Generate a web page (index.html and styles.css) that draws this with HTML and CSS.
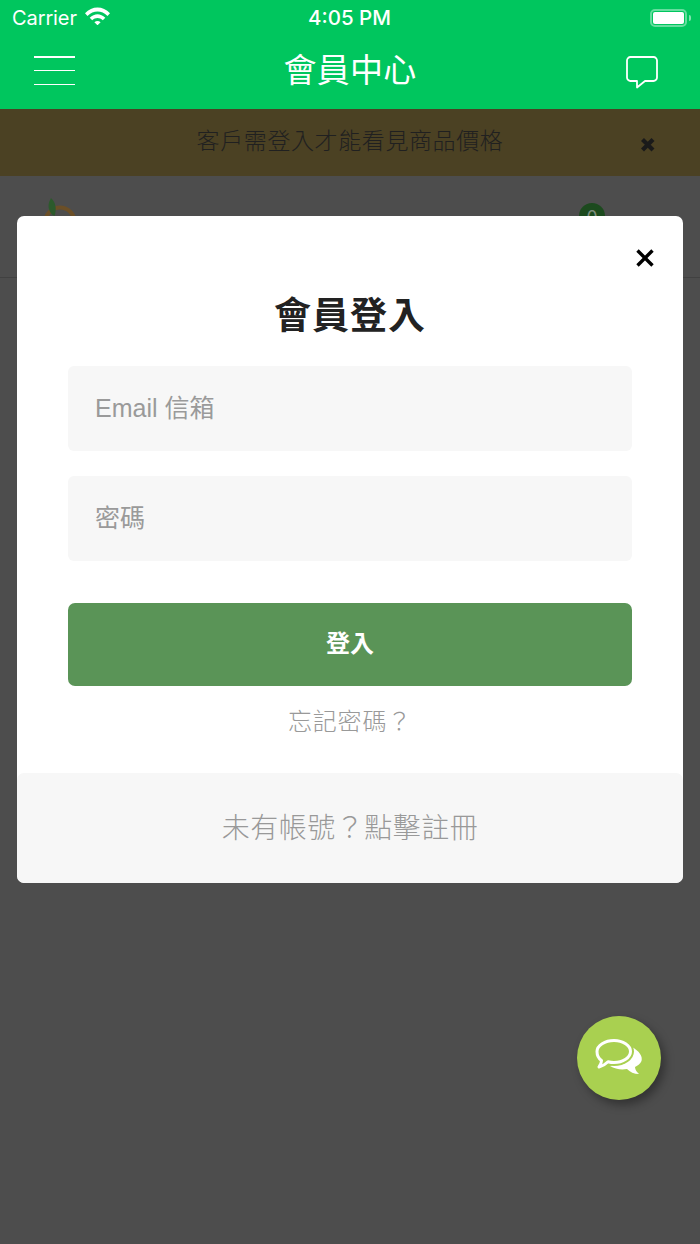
FILE: index.html
```html
<!DOCTYPE html>
<html lang="zh-Hant">
<head>
<meta charset="utf-8">
<title>會員中心</title>
<link rel="stylesheet" href="styles.css">
</head>
<body>
<div class="app">
  <header class="top">
    <div class="status">
      <div class="status-left">
        <span class="carrier">Carrier</span>
        <svg class="wifi" width="25" height="18" viewBox="0 0 25 18"><path d="M0 6.300C7 -1.300 18 -1.300 25 6.300l-2.500 2.600C16.500 3 8.500 3 2.500 8.900z" fill="#fff"/><path d="M4.700 10.800C9.500 6 15.500 6 20.300 10.800l-2.500 2.500c-3.200-3-7.400-3-10.600 0z" fill="#fff"/><path d="M9.400 15.300c2-1.700 4.200-1.700 6.200 0l-3.100 3z" fill="#fff"/></svg>
      </div>
      <span class="clock">4:05 PM</span>
      <div class="battery"><span class="battery-shell"><span class="battery-fill"></span></span><span class="battery-tip"></span></div>
    </div>
    <nav class="nav">
      <div class="burger"><span></span><span></span><span></span></div>
      <h1 class="nav-title">會員中心</h1>
      <svg class="nav-chat" width="32" height="33" viewBox="0 0 32 33"><path d="M4.500 1h23A3.500 3.500 0 0 1 31 4.500v17a3.500 3.500 0 0 1-3.500 3.500H19l-8 6.500V25H4.500A3.500 3.500 0 0 1 1 21.500v-17A3.500 3.500 0 0 1 4.500 1z" fill="none" stroke="#fff" stroke-width="1.800" stroke-linejoin="round"/></svg>
    </nav>
  </header>
  <div class="notice">
    <span class="notice-text">客戶需登入才能看見商品價格</span>
    <svg class="notice-x" width="16" height="16" viewBox="0 0 16 16"><path d="M2.500 2.500l10.500 10.500M13 2.500L2.500 13" stroke="#1a1a1a" stroke-width="4.200"/></svg>
  </div>
  <div class="shop-bar">
    <svg class="logo" width="42" height="50" viewBox="0 0 42 50"><circle cx="20" cy="26" r="14.500" fill="none" stroke="#6b4f27" stroke-width="4"/><path d="M11 2c4.500 4 6 11 3.500 18C8.500 17 6.500 9 11 2z" fill="#2c5a2c"/></svg>
    <div class="cart-badge">0</div>
  </div>
  <main class="page"></main>

  <section class="modal">
    <div class="modal-body">
      <svg class="modal-x" width="20" height="20" viewBox="0 0 20 20"><path d="M2.500 2.500l15 15M17.500 2.500l-15 15" stroke="#000" stroke-width="3.400"/></svg>
      <h2 class="modal-title">會員登入</h2>
      <div class="field">Email 信箱</div>
      <div class="field">密碼</div>
      <div class="submit">登入</div>
      <div class="forgot">忘記密碼？</div>
    </div>
    <div class="modal-foot">未有帳號？點擊註冊</div>
  </section>

  <div class="fab">
    <svg width="84" height="84" viewBox="0 0 84 84"><path d="M55 31C62 35 66 40 64.500 45C63.500 48 60 50 58 51C58 54 60 56 62 58C57 58 53 56 50 53C44 54 38 53 33 50L45 44z" fill="#fff"/><ellipse cx="37" cy="35.500" rx="20" ry="14.500" fill="#a9d050"/><path d="M37 24.500c9 0 16.500 5 16.500 11s-7.500 11-16.500 11c-2 0-4-.300-6-.800-2.500 2.500-5.500 4.500-9 5.300 1.500-2 2.500-4 2.500-6.500-3-2-4.500-5.500-4.500-9 0-6 8-11 17-11z" fill="#a9d050" stroke="#fff" stroke-width="3" stroke-linejoin="round"/></svg>
  </div>
</div>
</body>
</html>
```
FILE: styles.css
```css
* { box-sizing: border-box; margin: 0; padding: 0; }
html, body { width: 700px; height: 1244px; overflow: hidden; }
body { font-family: "Noto Sans CJK TC", "Noto Sans", sans-serif; background: #4d4d4d; }
.app { position: relative; width: 700px; height: 1244px; display: flex; flex-direction: column; }
.top { height: 109px; background: #00c65e; color: #fff; flex: none; }
.status { height: 36px; display: grid; grid-template-columns: 1fr auto 1fr; align-items: center; padding: 0 9px 0 12px; }
.status-left { display: flex; align-items: center; gap: 8px; }
.carrier { font: 20px/24px "Inter", "Liberation Sans", sans-serif; letter-spacing: -.1px; }
.wifi { display: block; margin-top: -4px; }
.clock { font: 500 20.500px/24px "Inter", "Liberation Sans", sans-serif; margin-left: -4px; }
.battery { justify-self: end; display: flex; align-items: center; gap: 2px; }
.battery-shell { width: 37px; height: 18px; border: 2px solid rgba(255,255,255,.4); border-radius: 5px; padding: 1px; display: block; }
.battery-fill { display: block; height: 100%; background: #fff; border-radius: 2px; }
.battery-tip { width: 2px; height: 6px; background: rgba(255,255,255,.5); border-radius: 0 2px 2px 0; }
.nav { height: 73px; display: grid; grid-template-columns: 1fr auto 1fr; align-items: center; padding: 0 34px 4px; }
.burger { width: 41px; height: 29px; display: flex; flex-direction: column; justify-content: space-between; }
.burger span { height: 1.500px; background: #fff; }
.nav-title { font-size: 33px; line-height: 40px; font-weight: 400; letter-spacing: .3px; margin-top: -5px; }
.nav-chat { justify-self: end; margin-right: 8px; margin-top: 3px; }
.notice { height: 67px; flex: none; background: #4b4123; position: relative; display: flex; align-items: center; justify-content: center; }
.notice-text { font-size: 23px; line-height: 30px; font-weight: 300; color: #202020; letter-spacing: .6px; margin-top: -8px; }
.notice-x { position: absolute; left: 640px; top: 28px; }
.shop-bar { height: 102px; flex: none; border-bottom: 1px solid #414141; position: relative; }
.logo { position: absolute; left: 40px; top: 20px; }
.cart-badge { position: absolute; left: 579px; top: 27px; width: 26px; height: 26px; border-radius: 50%; background: #1c4a1e; color: #7c8c7c; font-size: 20px; line-height: 28px; text-align: center; }
.page { flex: 1; }
.modal { position: absolute; left: 17px; top: 216px; width: 666px; height: 667px; background: #fff; border-radius: 7px; display: flex; flex-direction: column; overflow: hidden; }
.modal-body { position: relative; flex: 1; padding: 0 51px; display: flex; flex-direction: column; }
.modal-x { position: absolute; right: 28px; top: 32px; }
.modal-title { margin-top: 74px; font-size: 37px; line-height: 46px; font-weight: 700; text-align: center; color: #222; letter-spacing: 1px; }
.field { height: 85px; background: #f7f7f7; border-radius: 6px; padding: 0 27px 6px; display: flex; align-items: center; font-family: "Liberation Sans", "Noto Sans CJK TC", sans-serif; font-size: 25px; color: #9a9a9a; }
.modal-title + .field { margin-top: 30px; }
.field + .field { margin-top: 25px; }
.submit { margin-top: 42px; height: 83px; padding-bottom: 6px; background: #5a9457; border-radius: 7px; color: #fff; font-size: 24px; font-weight: 700; display: flex; align-items: center; justify-content: center; }
.forgot { margin-top: 14px; font-size: 24px; line-height: 40px; font-weight: 300; color: #999; text-align: center; letter-spacing: .8px; }
.modal-foot { height: 110px; flex: none; padding-bottom: 4px; background: #f7f7f7; color: #999; font-size: 28px; font-weight: 300; letter-spacing: .5px; display: flex; align-items: center; justify-content: center; border-radius: 7px; }
.fab { position: absolute; left: 577px; top: 1016px; width: 84px; height: 84px; border-radius: 50%; background: #a9d050; box-shadow: 4px 5px 10px rgba(0,0,0,.35); }
.fab svg { display: block; }
```
